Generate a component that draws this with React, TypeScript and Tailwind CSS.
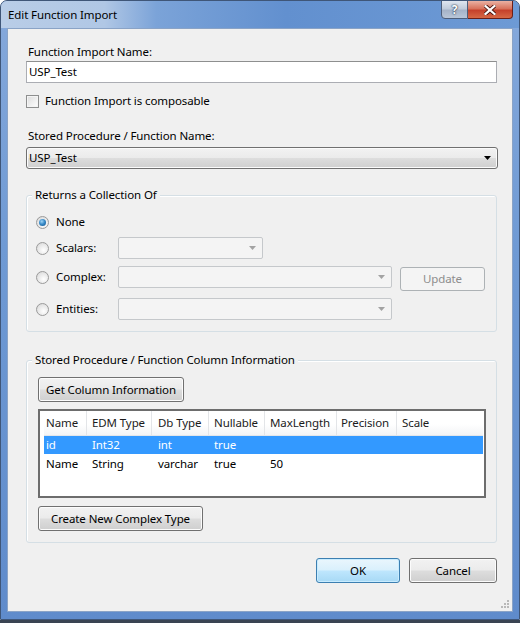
import React from "react";

const btn =
  "flex items-center justify-center rounded-[3px] border border-[#707070] bg-[linear-gradient(#f2f2f2_0%,#ebebeb_48%,#dddddd_52%,#cfcfcf_100%)] shadow-[inset_0_0_0_1px_#fcfcfc] text-black";

function Arrow({ color }: { color: string }) {
  return (
    <svg width="7" height="4" viewBox="0 0 7 4">
      <polygon points="0,0 7,0 3.5,4" fill={color} />
    </svg>
  );
}

function DisabledCombo({ w }: { w: string }) {
  return (
    <div
      className={`${w} h-[22px] rounded-[2px] border border-[#c5c8cb] bg-[#f4f4f4] flex items-center justify-end pr-[6px]`}
    >
      <Arrow color="#a3a3a3" />
    </div>
  );
}

function Radio({ checked }: { checked?: boolean }) {
  return (
    <div className="w-[13px] h-[13px] rounded-full border border-[#9a9a9a] bg-[radial-gradient(circle_at_60%_65%,#ffffff_0%,#e6e6e6_60%,#cfcfcf_100%)] flex items-center justify-center shrink-0">
      {checked && (
        <div className="w-[7px] h-[7px] rounded-full bg-[radial-gradient(circle_at_40%_35%,#9fd4f5_0%,#3a8cc9_45%,#0e4f8a_100%)]" />
      )}
    </div>
  );
}

export default function App() {
  const cols = [
    { t: "Name", w: "w-[42px]", pl: "pl-[2px]" },
    { t: "EDM Type", w: "w-[65px]", pl: "pl-[5px]" },
    { t: "Db Type", w: "w-[57px]", pl: "pl-[6px]" },
    { t: "Nullable", w: "w-[56px]", pl: "pl-[5px]" },
    { t: "MaxLength", w: "w-[72px]", pl: "pl-[5px]" },
    { t: "Precision", w: "w-[60px]", pl: "pl-[4px]" },
    { t: "Scale", w: "w-[60px]", pl: "pl-[5px]" },
  ];
  const rows = [
    ["id", "Int32", "int", "true", "", "", ""],
    ["Name", "String", "varchar", "true", "50", "", ""],
  ];

  return (
    <div
      className="w-[520px] h-[623px] bg-[#3a4452] overflow-hidden text-[11.5px] tracking-[-0.1px]"
      style={{ fontFamily: '"Noto Sans", "Open Sans", sans-serif' }}
    >
      <div className="w-[520px] h-[620px] bg-white">
        <div className="relative w-[520px] h-[620px] rounded-t-[7px] border border-[#3f5678] bg-[linear-gradient(#86a9db_0%,#6f9ad4_40%,#5f8bcb_100%)] flex flex-col overflow-hidden">
          {/* Title bar */}
          <div className="h-[27px] flex items-center pl-[7px] text-black shrink-0 bg-[linear-gradient(90deg,#b9cde7_0%,#b0c7e5_20%,#7ba3d8_30%,#6290cf_55%,#6d9ad5_100%)]">
            Edit Function Import
          </div>
          {/* title buttons */}
          <div className="absolute top-[-1px] right-[6px] flex">
            <div className="w-[27px] h-[19px] rounded-bl-[4px] border border-[#4d5e7a] bg-[linear-gradient(#dfe6f0_0%,#c1ccdb_45%,#a5b3c8_55%,#b9c6d8_100%)] flex items-center justify-center text-[12px] font-bold text-white [text-shadow:0_0_2px_#1f2d44,0_0_1px_#1f2d44]">
              ?
            </div>
            <div className="w-[45px] h-[19px] rounded-br-[4px] border border-l-0 border-[#6b1f18] bg-[linear-gradient(#eab1a3_0%,#d7725c_45%,#c5412b_55%,#d66845_100%)] flex items-center justify-center">
              <svg width="12" height="10" viewBox="0 0 12 10">
                <path d="M1.5 1 L10.5 9 M10.5 1 L1.5 9" stroke="#4a1610" strokeWidth="4" strokeLinecap="square" />
                <path d="M1.5 1 L10.5 9 M10.5 1 L1.5 9" stroke="#ffffff" strokeWidth="2.2" strokeLinecap="square" />
              </svg>
            </div>
          </div>
          {/* Client area */}
          <div className="ml-[6px] w-[506px] h-[584px] border border-[#8aa3c6] bg-[#f0f0f0] flex flex-col pl-[18px] pr-[14px] pt-[15px] text-black leading-[16px] relative">
            <div className="pl-[2px] h-[16px]">Function Import Name:</div>
            <div className="mt-[1px] h-[22px] w-[471px] border border-[#abadb3] border-t-[#8e8f8f] bg-white flex items-center pl-[2px]">
              USP_Test
            </div>
            <div className="mt-[10px] h-[16px] flex items-center">
              <div className="w-[13px] h-[13px] border border-[#8e8f8f] bg-[linear-gradient(135deg,#dcdcdc,#ffffff)] shadow-[inset_0_0_0_1px_#f4f4f4]" />
              <span className="ml-[6px]">Function Import is composable</span>
            </div>
            <div className="mt-[19px] pl-[2px] h-[16px]">Stored Procedure / Function Name:</div>
            <div className="mt-[3px] h-[22px] w-[472px] rounded-[3px] border border-[#707070] bg-[linear-gradient(#f2f2f2_0%,#ebebeb_48%,#dddddd_52%,#cfcfcf_100%)] shadow-[inset_0_0_0_1px_#fbfbfb] flex items-center justify-between pl-[2px] pr-[6px]">
              <span>USP_Test</span>
              <Arrow color="#000000" />
            </div>

            {/* Group 1 */}
            <div className="relative mt-[26px] w-[471px] h-[137px] rounded-[3px] border border-[#d5dfe5] shadow-[inset_1px_1px_0_#ffffff] flex flex-col pl-[9px] pt-[18px]">
              <div className="absolute top-[-9px] left-[5px] px-[3px] bg-[#f0f0f0]">Returns a Collection Of</div>
              <div className="h-[16px] flex items-center">
                <Radio checked />
                <span className="ml-[7px]">None</span>
              </div>
              <div className="mt-[7px] h-[22px] flex items-center">
                <div className="w-[82px] flex items-center">
                  <Radio />
                  <span className="ml-[7px]">Scalars:</span>
                </div>
                <DisabledCombo w="w-[145px]" />
              </div>
              <div className="mt-[7px] h-[25px] flex items-start">
                <div className="w-[82px] h-[22px] flex items-center">
                  <Radio />
                  <span className="ml-[7px]">Complex:</span>
                </div>
                <DisabledCombo w="w-[274px]" />
                <div className="ml-[8px] mt-[1px] w-[85px] h-[24px] rounded-[3px] border border-[#adb2b5] bg-[#f4f4f4] flex items-center justify-center text-[#8d8d8d]">
                  Update
                </div>
              </div>
              <div className="mt-[7px] h-[22px] flex items-center">
                <div className="w-[82px] flex items-center">
                  <Radio />
                  <span className="ml-[7px]">Entities:</span>
                </div>
                <DisabledCombo w="w-[274px]" />
              </div>
            </div>

            {/* Group 2 */}
            <div className="relative mt-[28px] w-[471px] h-[183px] rounded-[3px] border border-[#d5dfe5] shadow-[inset_1px_1px_0_#ffffff] flex flex-col pl-[11px] pt-[16px]">
              <div className="absolute top-[-9px] left-[5px] px-[3px] bg-[#f0f0f0]">
                Stored Procedure / Function Column Information
              </div>
              <div className={`${btn} w-[146px] h-[25px]`}>Get Column Information</div>
              <div className="mt-[7px] w-[448px] h-[89px] border-2 border-[#6d6d6d] bg-white pl-[4px] pr-[1px]">
                <div className="h-[25px] flex bg-[linear-gradient(#ffffff_0%,#ffffff_55%,#f3f4f6_100%)] border-b border-[#e3e6ea]">
                  {cols.map((c, i) => (
                    <div
                      key={i}
                      className={`${c.w} ${c.pl} shrink-0 flex items-center text-[#1b1b1b] ${i > 0 ? "border-l border-[#e3e5e8]" : ""}`}
                    >
                      {c.t}
                    </div>
                  ))}
                </div>
                {rows.map((r, ri) => (
                  <div
                    key={ri}
                    className={`flex ${ri === 0 ? "bg-[#3399ff] text-white h-[18px]" : "text-black h-[19px]"}`}
                  >
                    {r.map((v, ci) => (
                      <div
                        key={ci}
                        className={`${cols[ci].w} ${cols[ci].pl} ${ci > 0 ? "border-l border-transparent" : ""} shrink-0 flex items-center`}
                      >
                        {v}
                      </div>
                    ))}
                  </div>
                ))}
              </div>
              <div className={`${btn} mt-[8px] w-[165px] h-[25px]`}>Create New Complex Type</div>
            </div>

            {/* Bottom buttons */}
            <div className="mt-[15px] w-[471px] flex justify-end gap-[9px]">
              <div className="w-[84px] h-[25px] rounded-[3px] border border-[#3c7fb1] bg-[linear-gradient(#eaf6fd_0%,#d9f0fc_48%,#bee6fd_52%,#a7d9f5_100%)] shadow-[inset_0_0_0_1px_#c8ecff] flex items-center justify-center">
                OK
              </div>
              <div className={`${btn} w-[88px] h-[25px]`}>Cancel</div>
            </div>

            {/* resize grip */}
            <div className="absolute right-[3px] bottom-[3px] grid grid-cols-3 gap-[1px]">
              {[0, 0, 1, 0, 1, 1, 1, 1, 1].map((v, i) => (
                <div key={i} className={`w-[2px] h-[2px] ${v ? "bg-[#b8b8b8]" : ""}`} />
              ))}
            </div>
          </div>
        </div>
      </div>
    </div>
  );
}
